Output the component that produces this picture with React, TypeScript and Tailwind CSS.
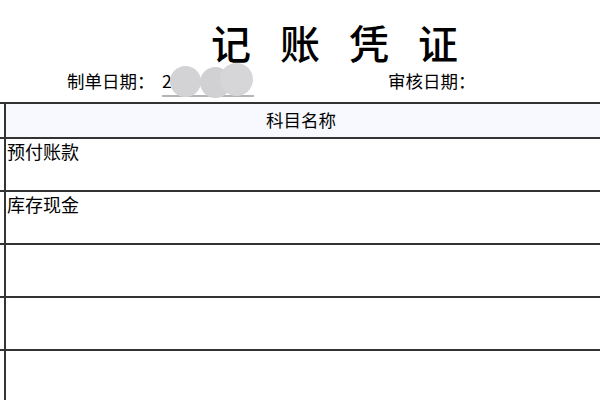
import React from 'react';

const rows = ['预付账款', '库存现金', '', '', ''];

export default function App() {
  return (
    <div className="w-[600px] h-[400px] bg-white overflow-hidden text-black font-['Noto_Sans_CJK_SC','Noto_Sans',sans-serif]">
      {/* Title */}
      <div className="flex gap-[29px] pl-[211px] pt-[19px] h-[70px] text-[40px] leading-[46px] font-medium">
        <span>记</span>
        <span>账</span>
        <span>凭</span>
        <span>证</span>
      </div>

      {/* Dates */}
      <div className="flex h-[32px] text-[17.5px] leading-[22px] pl-[67px]">
        <div className="w-[321px] flex">
          <span className="w-[95px]">制单日期：</span>
          <span className="relative w-[92px] h-[27px] border-b-2 border-[#b4b4b6]">
            <span>2</span>
            <span className="absolute left-[8px] top-[-4px] w-[31px] h-[31px] rounded-full bg-[#d3d3d5]" />
            <span className="absolute left-[38px] top-[-3px] w-[31px] h-[31px] rounded-full bg-[#d1d1d3]" />
            <span className="absolute left-[58px] top-[-7px] w-[33px] h-[33px] rounded-full bg-[#d6d6d8]" />
          </span>
        </div>
        <span>审核日期：</span>
      </div>

      {/* Table */}
      <div className="border-t-2 border-[#333]">
        <div className="flex h-[35px] border-b-2 border-[#333]">
          <div className="w-[6px] border-r-2 border-[#333]" />
          <div className="flex-1 bg-[#f7f9fe] flex justify-center items-center text-[17.5px] pr-[4px]">科目名称</div>
        </div>
        {rows.map((r, i) => (
          <div key={i} className="flex h-[53px] border-b-2 border-[#333]">
            <div className="w-[6px] border-r-2 border-[#333]" />
            <div className="flex-1 text-[18px] leading-[22px] pl-[1px] pt-[1px]">{r}</div>
          </div>
        ))}
      </div>
    </div>
  );
}
